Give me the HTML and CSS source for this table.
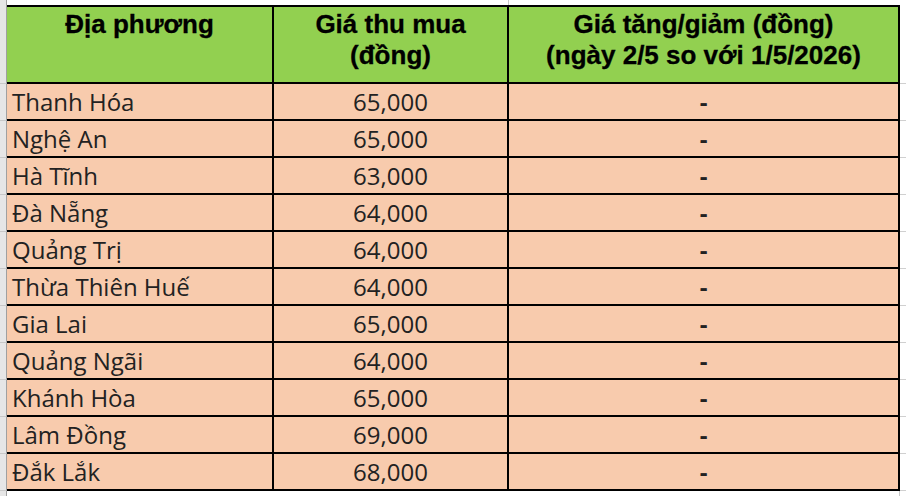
FILE: index.html
```html
<!DOCTYPE html>
<html lang="vi">
<head>
<meta charset="utf-8">
<title>Giá thu mua</title>
<link rel="stylesheet" href="styles.css">
</head>
<body>
<table class="sheet">
  <colgroup>
    <col class="c-rh">
    <col class="c-1">
    <col class="c-2">
    <col class="c-3">
    <col class="c-g">
  </colgroup>
  <tr class="top">
    <td class="rh"></td><td></td><td class="vgrid"></td><td></td><td></td>
  </tr>
  <tr class="head">
    <td class="rh"></td>
    <th>Địa phương</th>
    <th>Giá thu mua<br>(đồng)</th>
    <th>Giá tăng/giảm (đồng)<br>(ngày 2/5 so với 1/5/2026)</th>
    <td class="g"></td>
  </tr>
  <tr><td class="rh"></td><td class="name">Thanh Hóa</td><td class="num">65,000</td><td class="chg">-</td><td class="g"></td></tr>
  <tr><td class="rh"></td><td class="name">Nghệ An</td><td class="num">65,000</td><td class="chg">-</td><td class="g"></td></tr>
  <tr><td class="rh"></td><td class="name">Hà Tĩnh</td><td class="num">63,000</td><td class="chg">-</td><td class="g"></td></tr>
  <tr><td class="rh"></td><td class="name">Đà Nẵng</td><td class="num">64,000</td><td class="chg">-</td><td class="g"></td></tr>
  <tr><td class="rh"></td><td class="name">Quảng Trị</td><td class="num">64,000</td><td class="chg">-</td><td class="g"></td></tr>
  <tr><td class="rh"></td><td class="name">Thừa Thiên Huế</td><td class="num">64,000</td><td class="chg">-</td><td class="g"></td></tr>
  <tr><td class="rh"></td><td class="name">Gia Lai</td><td class="num">65,000</td><td class="chg">-</td><td class="g"></td></tr>
  <tr><td class="rh"></td><td class="name">Quảng Ngãi</td><td class="num">64,000</td><td class="chg">-</td><td class="g"></td></tr>
  <tr><td class="rh"></td><td class="name">Khánh Hòa</td><td class="num">65,000</td><td class="chg">-</td><td class="g"></td></tr>
  <tr><td class="rh"></td><td class="name">Lâm Đồng</td><td class="num">69,000</td><td class="chg">-</td><td class="g"></td></tr>
  <tr><td class="rh"></td><td class="name">Đắk Lắk</td><td class="num">68,000</td><td class="chg">-</td><td class="g"></td></tr>
  <tr class="tail">
    <td class="rh"></td><td></td><td></td><td class="vgrid3"></td><td></td>
  </tr>
</table>
</body>
</html>
```
FILE: styles.css
```css
html, body {
  margin: 0;
  padding: 0;
  background: #ffffff;
}

.sheet {
  table-layout: fixed;
  width: 906px;
  border-collapse: separate;
  border-spacing: 0;
}

.c-rh { width: 7px; }
.c-1 { width: 267px; }
.c-2 { width: 235px; }
.c-3 { width: 391px; }
.c-g { width: 6px; }

.sheet td, .sheet th {
  padding: 0;
  box-sizing: border-box;
}

.sheet .rh {
  background: #e6e6e6;
  border-right: 1px solid #a0a0a0;
  border-bottom: 1px solid #c8c8c8;
}

.sheet .top td {
  height: 5px;
  font-size: 0;
  line-height: 0;
}

.sheet .top .rh {
  border-bottom: none;
}

.sheet .vgrid {
  border-right: 1px solid #c8c8c8;
}

.sheet .head th {
  background: #92d050;
  color: #000000;
  font-family: "Liberation Sans", Arial, sans-serif;
  font-weight: bold;
  font-size: 26px;
  line-height: 31px;
  text-align: center;
  vertical-align: top;
  padding: 2px 0 11px;
  border-top: 2px solid #000000;
  border-bottom: 2px solid #000000;
  border-right: 2px solid #000000;
  -webkit-text-stroke: 0.3px #000000;
}

.sheet .g {
  border-bottom: 1px solid #d0d0d0;
}

.sheet .name, .sheet .num, .sheet .chg {
  background: #f8cbad;
  color: #222222;
  font-family: "Open Sans", "Noto Sans", sans-serif;
  font-size: 24px;
  line-height: 35px;
  vertical-align: middle;
  border-right: 2px solid #000000;
  border-bottom: 2px solid #000000;
  white-space: nowrap;
}

.sheet .name {
  text-align: left;
  padding-left: 5px;
}

.sheet .num {
  text-align: center;
}

.sheet .chg {
  text-align: center;
  font-weight: bold;
}

.sheet .tail td {
  height: 6px;
}

.sheet .tail .rh {
  border-bottom: none;
}

.sheet .vgrid3 {
  border-right: 1px solid #c8c8c8;
}
```
